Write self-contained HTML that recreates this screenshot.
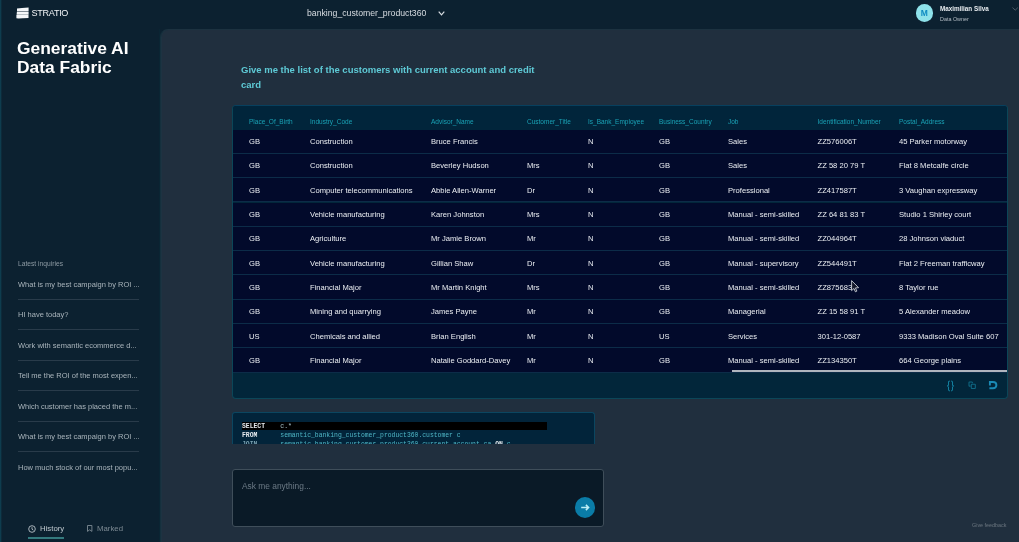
<!DOCTYPE html>
<html><head><meta charset="utf-8">
<style>
*{margin:0;padding:0;box-sizing:border-box}
html,body{width:1019px;height:542px;overflow:hidden;background:#0c2130;font-family:"Liberation Sans",sans-serif}
.abs{position:absolute;white-space:nowrap}
#edge{position:absolute;left:0;top:0;width:2px;height:542px;background:linear-gradient(90deg,#0f4658,#0c2130)}
#panel{position:absolute;left:160px;top:29px;width:859px;height:513px;background:#202f3e;border-top:1px solid #1c3240;border-left:1px solid #15303d;box-shadow:inset 1px 0 0 #1d3342;border-top-left-radius:8px}
.brand{left:31.6px;top:7.4px;color:#f2f4f6;font-size:9.1px;line-height:12px;letter-spacing:-0.32px}
.title{left:17px;top:39px;color:#fff;font-size:17.4px;font-weight:bold;line-height:18.5px}
.ds{left:307px;top:7px;color:#d8dde2;font-size:8.7px;line-height:12px}
.uname{left:940px;top:4.1px;color:#e8ecef;font-size:6.3px;font-weight:bold;line-height:10px}
.urole{left:940px;top:14.7px;color:#b4bdc4;font-size:5.4px;line-height:9px}
#avatar{position:absolute;left:915.5px;top:4px;width:17.5px;height:17.5px;border-radius:50%;background:#8ee2ea;color:#0f8bc2;font-size:8.5px;font-weight:bold;text-align:center;line-height:19px}
.q{left:241px;top:62px;color:#5ecad6;font-size:9.5px;font-weight:bold;line-height:15px;width:310px;white-space:normal}
.li-h{left:18px;top:258.9px;color:#8d9aa3;font-size:6.7px;line-height:9px}
.li{position:absolute;left:18px;width:122px;color:#a9b4bb;font-size:7.5px;line-height:10px;white-space:nowrap}
.sep{position:absolute;left:18px;width:121px;height:1px;background:#293b4a}
#tbl{position:absolute;left:232px;top:105px;width:776px;height:294.3px;background:#02263a;border:1px solid #0b4658;border-top-color:#07405e;border-radius:4px;overflow:hidden}
#thead{position:absolute;left:0;top:0;width:100%;height:23.6px;background:#01253b}
.row{position:absolute;left:0;width:100%;height:24.3px;background:#020a2b;border-bottom:1px solid #0c2c48}
.c{position:absolute;top:0.5px;white-space:nowrap;font-size:7.6px;line-height:23.3px;color:#eceff3}
.h{position:absolute;top:4px;white-space:nowrap;font-size:6.5px;line-height:23.6px;color:#1aa2b5}
#sbar{position:absolute;left:499px;top:264.4px;width:276px;height:1.2px;background:#b0b5be}
#sql{position:absolute;left:232px;top:412px;width:363px;height:32px;background:#02243a;border:1px solid #0b4660;border-bottom:none;border-radius:3px 3px 0 0;overflow:hidden}
.code{position:absolute;left:9px;font-family:"Liberation Mono",monospace;font-size:6.4px;line-height:8.85px;white-space:pre;color:#4fb6c6}
.kw{color:#e6eaee;font-weight:bold}
#hl{position:absolute;left:9px;top:9px;width:305px;height:8px;background:#000}
#input{position:absolute;left:232px;top:469.3px;width:371.5px;height:57.5px;background:#0a1a27;border:1px solid #3f4e5a;border-radius:3px}
.ph{left:242px;top:481.3px;color:#6c7a86;font-size:8.4px;line-height:10px}
#send{position:absolute;left:574.8px;top:497.2px;width:20.5px;height:20.5px;border-radius:50%;background:#0a7ca7}
.fb{left:972px;top:520.8px;color:#6a757f;font-size:5.4px;line-height:9px}
.tab{color:#bfc8ce;font-size:7.8px;line-height:10px}
#uline{position:absolute;left:28px;top:537px;width:36px;height:2px;background:#347a7e}
#wrap{position:absolute;left:0;top:0;width:1019px;height:542px;will-change:transform}
</style></head><body><div id="wrap">
<div id="edge"></div>
<div style="position:absolute;left:159px;top:29px;width:1px;height:513px;background:#0a2533"></div>
<div id="panel"></div>

<!-- top bar -->
<svg class="abs" width="14" height="13" viewBox="0 0 14 13" style="left:16px;top:6px">
 <path d="M1 2.4 L6 1.9 L12.6 1.6 V5.35 H1Z M0.9 5.75 H12.6 V8.65 H0.6Z M0.4 9.05 H12.5 V12.1 L7 12.3 L2.6 12.5 L0.4 12.2Z" fill="#f4f6f8"/>
</svg>
<div class="abs brand">STRATIO</div>

<div class="abs ds">banking_customer_product360</div>
<svg class="abs" style="left:438px;top:11px" width="7" height="5" viewBox="0 0 7 5"><path d="M0.7 0.7 L3.5 3.8 L6.3 0.7" stroke="#d8dde2" stroke-width="1.2" fill="none"/></svg>

<div id="avatar">M</div>
<div class="abs uname">Maximilian Silva</div>
<div class="abs urole">Data Owner</div>
<svg class="abs" style="left:1011.5px;top:7px" width="7" height="4" viewBox="0 0 7 4"><path d="M0.5 0.6 L3.2 3.2 L5.9 0.6" stroke="#56636e" stroke-width="0.9" fill="none"/></svg>

<!-- sidebar -->
<div class="abs title">Generative AI<br>Data Fabric</div>
<div class="abs li-h">Latest inquiries</div>
<div class="li" style="top:279.9px">What is my best campaign by ROI ...</div>
<div class="sep" style="top:298.6px"></div>
<div class="li" style="top:310.4px">HI have today?</div>
<div class="sep" style="top:329.1px"></div>
<div class="li" style="top:340.9px">Work with semantic ecommerce d...</div>
<div class="sep" style="top:359.6px"></div>
<div class="li" style="top:371.4px">Tell me the ROI of the most expen...</div>
<div class="sep" style="top:390.1px"></div>
<div class="li" style="top:401.9px">Which customer has placed the m...</div>
<div class="sep" style="top:420.6px"></div>
<div class="li" style="top:432.4px">What is my best campaign by ROI ...</div>
<div class="sep" style="top:451.1px"></div>
<div class="li" style="top:462.9px">How much stock of our most popu...</div>
<svg class="abs" style="left:28px;top:524.5px" width="8" height="8" viewBox="0 0 8 8"><circle cx="4" cy="4" r="3.3" stroke="#b9c2c8" stroke-width="0.9" fill="none"/><path d="M4 2.2 V4.2 L5.4 5.2" stroke="#b9c2c8" stroke-width="0.9" fill="none"/></svg>
<div class="abs tab" style="left:40px;top:523.8px">History</div>
<div id="uline"></div>
<svg class="abs" style="left:86.6px;top:525px" width="6" height="7" viewBox="0 0 6 7"><path d="M0.5 0.5 H4.9 V6.4 L2.7 4.8 L0.5 6.4Z" stroke="#7d8a93" stroke-width="0.9" fill="none"/></svg>
<div class="abs tab" style="left:97px;top:523.8px;color:#7d8a93">Marked</div>

<!-- main -->
<div class="abs q">Give me the list of the customers with current account and credit card</div>

<div id="tbl">
 <div id="thead"><div class="h" style="left:16px">Place_Of_Birth</div>
<div class="h" style="left:77px">Industry_Code</div>
<div class="h" style="left:198px">Advisor_Name</div>
<div class="h" style="left:294px">Customer_Title</div>
<div class="h" style="left:355px">Is_Bank_Employee</div>
<div class="h" style="left:426px">Business_Country</div>
<div class="h" style="left:495px">Job</div>
<div class="h" style="left:584.5px">Identification_Number</div>
<div class="h" style="left:666px">Postal_Address</div></div>
<div class="row" style="top:23.60px"><div class="c" style="left:16px">GB</div><div class="c" style="left:77px">Construction</div><div class="c" style="left:198px">Bruce Francis</div><div class="c" style="left:355px">N</div><div class="c" style="left:426px">GB</div><div class="c" style="left:495px">Sales</div><div class="c" style="left:584.5px">ZZ576006T</div><div class="c" style="left:666px">45 Parker motorway</div></div>
<div class="row" style="top:47.90px"><div class="c" style="left:16px">GB</div><div class="c" style="left:77px">Construction</div><div class="c" style="left:198px">Beverley Hudson</div><div class="c" style="left:294px">Mrs</div><div class="c" style="left:355px">N</div><div class="c" style="left:426px">GB</div><div class="c" style="left:495px">Sales</div><div class="c" style="left:584.5px">ZZ 58 20 79 T</div><div class="c" style="left:666px">Flat 8 Metcalfe circle</div></div>
<div class="row" style="top:72.20px"><div class="c" style="left:16px">GB</div><div class="c" style="left:77px">Computer telecommunications</div><div class="c" style="left:198px">Abbie Allen-Warner</div><div class="c" style="left:294px">Dr</div><div class="c" style="left:355px">N</div><div class="c" style="left:426px">GB</div><div class="c" style="left:495px">Professional</div><div class="c" style="left:584.5px">ZZ417587T</div><div class="c" style="left:666px">3 Vaughan expressway</div></div>
<div class="row" style="top:96.50px"><div class="c" style="left:16px">GB</div><div class="c" style="left:77px">Vehicle manufacturing</div><div class="c" style="left:198px">Karen Johnston</div><div class="c" style="left:294px">Mrs</div><div class="c" style="left:355px">N</div><div class="c" style="left:426px">GB</div><div class="c" style="left:495px">Manual - semi-skilled</div><div class="c" style="left:584.5px">ZZ 64 81 83 T</div><div class="c" style="left:666px">Studio 1 Shirley court</div></div>
<div class="row" style="top:120.80px"><div class="c" style="left:16px">GB</div><div class="c" style="left:77px">Agriculture</div><div class="c" style="left:198px">Mr Jamie Brown</div><div class="c" style="left:294px">Mr</div><div class="c" style="left:355px">N</div><div class="c" style="left:426px">GB</div><div class="c" style="left:495px">Manual - semi-skilled</div><div class="c" style="left:584.5px">ZZ044964T</div><div class="c" style="left:666px">28 Johnson viaduct</div></div>
<div class="row" style="top:145.10px"><div class="c" style="left:16px">GB</div><div class="c" style="left:77px">Vehicle manufacturing</div><div class="c" style="left:198px">Gillian Shaw</div><div class="c" style="left:294px">Dr</div><div class="c" style="left:355px">N</div><div class="c" style="left:426px">GB</div><div class="c" style="left:495px">Manual - supervisory</div><div class="c" style="left:584.5px">ZZ544491T</div><div class="c" style="left:666px">Flat 2 Freeman trafficway</div></div>
<div class="row" style="top:169.40px"><div class="c" style="left:16px">GB</div><div class="c" style="left:77px">Financial Major</div><div class="c" style="left:198px">Mr Martin Knight</div><div class="c" style="left:294px">Mrs</div><div class="c" style="left:355px">N</div><div class="c" style="left:426px">GB</div><div class="c" style="left:495px">Manual - semi-skilled</div><div class="c" style="left:584.5px">ZZ875683T</div><div class="c" style="left:666px">8 Taylor rue</div></div>
<div class="row" style="top:193.70px"><div class="c" style="left:16px">GB</div><div class="c" style="left:77px">Mining and quarrying</div><div class="c" style="left:198px">James Payne</div><div class="c" style="left:294px">Mr</div><div class="c" style="left:355px">N</div><div class="c" style="left:426px">GB</div><div class="c" style="left:495px">Managerial</div><div class="c" style="left:584.5px">ZZ 15 58 91 T</div><div class="c" style="left:666px">5 Alexander meadow</div></div>
<div class="row" style="top:218.00px"><div class="c" style="left:16px">US</div><div class="c" style="left:77px">Chemicals and allied</div><div class="c" style="left:198px">Brian English</div><div class="c" style="left:294px">Mr</div><div class="c" style="left:355px">N</div><div class="c" style="left:426px">US</div><div class="c" style="left:495px">Services</div><div class="c" style="left:584.5px">301-12-0587</div><div class="c" style="left:666px">9333 Madison Oval Suite 607</div></div>
<div class="row" style="top:242.30px"><div class="c" style="left:16px">GB</div><div class="c" style="left:77px">Financial Major</div><div class="c" style="left:198px">Natalie Goddard-Davey</div><div class="c" style="left:294px">Mr</div><div class="c" style="left:355px">N</div><div class="c" style="left:426px">GB</div><div class="c" style="left:495px">Manual - semi-skilled</div><div class="c" style="left:584.5px">ZZ134350T</div><div class="c" style="left:666px">664 George plains</div></div>
 <div id="sbar"></div>
</div>

<svg class="abs" style="left:946px;top:379.5px" width="9" height="12" viewBox="0 0 9 12"><path d="M3.9 1 C2.9 1 2.5 1.3 2.5 2.3 V4.7 C2.5 5.4 2 5.8 1 5.9 C2 6 2.5 6.4 2.5 7.1 V9.6 C2.5 10.6 2.9 10.9 3.9 10.9 M5.1 1 C6.1 1 6.5 1.3 6.5 2.3 V4.7 C6.5 5.4 7 5.8 8 5.9 C7 6 6.5 6.4 6.5 7.1 V9.6 C6.5 10.6 6.1 10.9 5.1 10.9" stroke="#137f9e" stroke-width="1.05" fill="none"/></svg>
<svg class="abs" style="left:967.5px;top:381.2px" width="9" height="9" viewBox="0 0 9 9"><path d="M4.4 2.3 V1.5 C4.4 1.1 4.1 0.9 3.7 0.9 H1.6 C1.2 0.9 1 1.1 1 1.5 V4.4 C1 4.8 1.2 5.1 1.6 5.1 H2.6" stroke="#0f6883" stroke-width="1.05" fill="none"/><rect x="3.3" y="3.3" width="4" height="4.2" rx="0.5" stroke="#0f6883" stroke-width="1.05" fill="none"/></svg>
<svg class="abs" style="left:988px;top:380px" width="10" height="10" viewBox="0 0 10 10"><path d="M1.9 5.6 V2 H5 C7.3 2 8.4 3.2 8.4 5 C8.4 6.9 7.3 8.2 5 8.2 H1.4" stroke="#1a8ab5" stroke-width="1.9" fill="none"/></svg>
<svg class="abs" style="left:850.6px;top:280px" width="9" height="13" viewBox="0 0 9 13"><path d="M0.6 0.6 V10.6 L2.9 8.5 L4.4 11.8 L5.9 11.1 L4.4 7.9 L7.6 7.7Z" fill="#14182a" stroke="#e8ecf2" stroke-width="0.75" stroke-linejoin="round"/></svg>
<div id="sql">
 <div id="hl"></div>
 <div class="code" style="top:10px"><span class="kw">SELECT</span>    <span style="color:#a8c4cc">c.*</span>
<span class="kw">FROM</span>      semantic_banking_customer_product360.customer c
<span class="kw" style="color:#7aa0b0">JOIN</span>      semantic_banking_customer_product360.current_account ca <span class="kw">ON</span> c.</div>
</div>

<div id="input"></div>
<div class="abs ph">Ask me anything...</div>
<div id="send"><svg width="20" height="20" viewBox="0 0 20 20" style="position:absolute;left:0;top:0"><path d="M6.2 10.5 H13.4 M10.9 7.9 L13.6 10.5 L10.9 13.1" stroke="#bdeef6" stroke-width="1.5" fill="none"/></svg></div>
<div class="abs fb">Give feedback</div>

</div></body></html>
